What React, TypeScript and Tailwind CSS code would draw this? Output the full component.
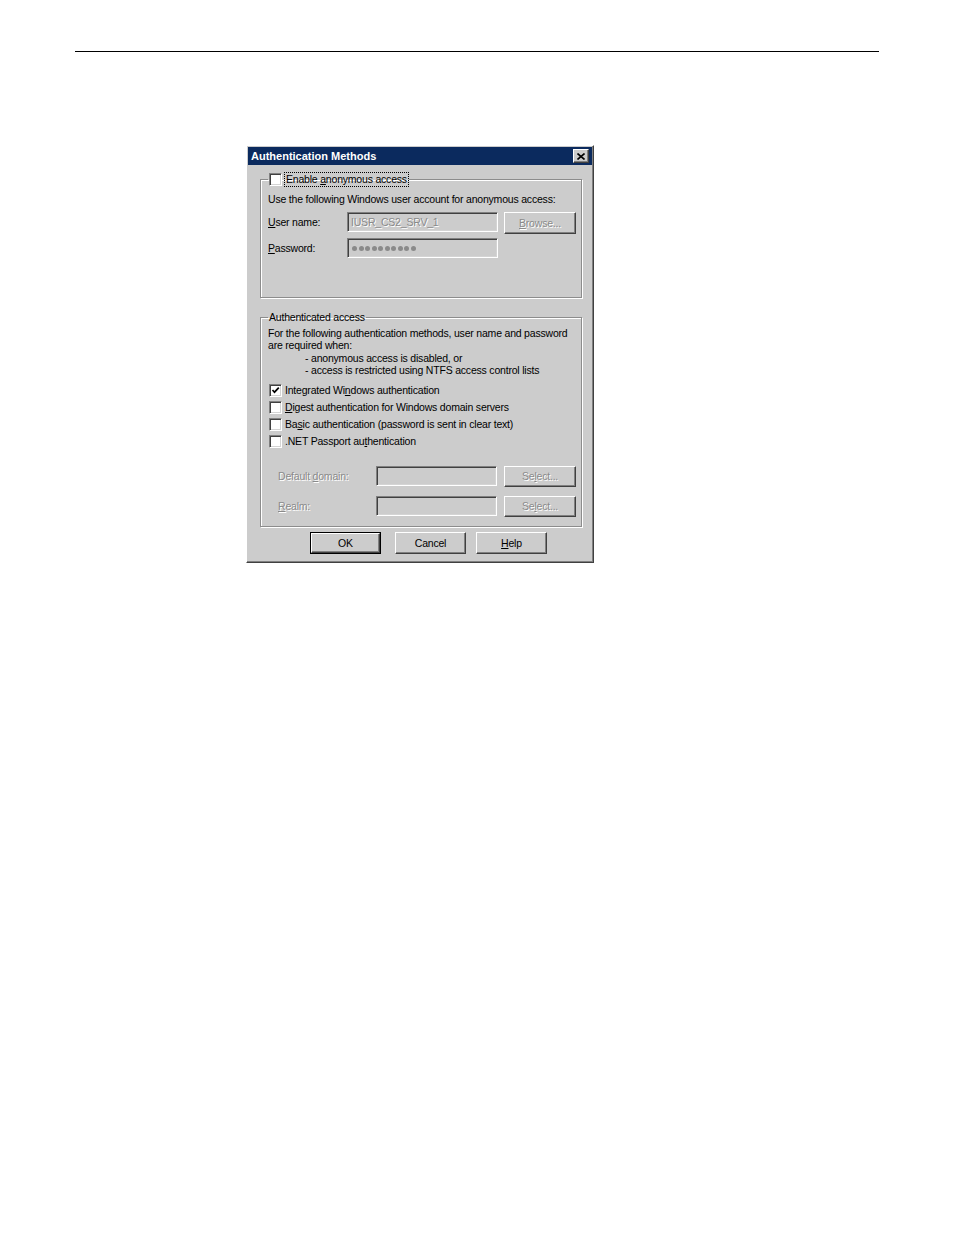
import React from 'react';

const raised =
  'border border-t-white border-l-white border-r-[#404040] border-b-[#404040] shadow-[inset_-1px_-1px_0_#808080]';
const sunken =
  'border border-t-[#808080] border-l-[#808080] border-r-white border-b-white shadow-[inset_1px_1px_0_#404040,inset_-1px_-1px_0_#d4d4d4]';
const etched = 'border border-[#8c8c8c] shadow-[inset_1px_1px_0_#fff,1px_1px_0_#fff]';
const disabledText = 'text-[#8a8a8a] [text-shadow:1px_1px_0_#fff]';

const U: React.FC<{ children: React.ReactNode }> = ({ children }) => (
  <span className="underline underline-offset-[1px] decoration-1">{children}</span>
);

const Check: React.FC<{ checked?: boolean }> = ({ checked }) => (
  <span className={`w-[13px] h-[13px] bg-white flex items-center justify-center shrink-0 ${sunken}`}>
    {checked && (
      <svg width="9" height="9" viewBox="0 0 9 9">
        <path d="M1.5 4 L3.5 6.2 L7.8 1.6" fill="none" stroke="#000" strokeWidth="1.7" />
      </svg>
    )}
  </span>
);

const CheckRow: React.FC<{ checked?: boolean; children: React.ReactNode }> = ({ checked, children }) => (
  <div className="flex items-center gap-[3px] h-[17px] pl-[1px]">
    <Check checked={checked} />
    <span>{children}</span>
  </div>
);

const Field: React.FC<{ width: string; children?: React.ReactNode }> = ({ width, children }) => (
  <div className={`${width} h-[20px] shrink-0 flex items-center px-[3px] ${sunken} ${disabledText}`}>{children}</div>
);

const Button: React.FC<{ children: React.ReactNode; disabled?: boolean; isDefault?: boolean; className?: string }> = ({
  children,
  disabled,
  isDefault,
  className = 'h-[22px]',
}) => {
  if (isDefault) {
    return (
      <div className={`w-[71px] border border-black ${className}`}>
        <div className={`h-full flex items-center justify-center ${raised}`}>{children}</div>
      </div>
    );
  }
  return (
    <div
      className={`w-[71px] shrink-0 flex items-center justify-center ${raised} ${disabled ? disabledText : ''} ${className}`}
    >
      {children}
    </div>
  );
};

const dots = Array.from({ length: 10 });

export default function App() {
  return (
    <div className="min-h-[1235px] bg-white font-['Liberation_Sans',Arial,sans-serif] text-[10.5px] tracking-[-0.2px] leading-[13px] text-black">
      <div className="pt-[51px] px-[75px]">
        <div className="h-px bg-black" />
      </div>

      <div className={`ml-[246px] mt-[93px] w-[348px] h-[418px] bg-[#cccccc] p-px ${raised}`}>
        {/* title bar */}
        <div className="h-[18px] bg-[#0b2a5e] flex items-center justify-between pl-[3px] pr-[3px]">
          <span className="text-white font-bold text-[11px] tracking-[0px]">Authentication Methods</span>
          <div className={`w-[16px] h-[14px] bg-[#cccccc] flex items-center justify-center ${raised}`}>
            <svg width="8" height="7" viewBox="0 0 8 7">
              <path d="M0.5 0.5 L7.5 6.5 M7.5 0.5 L0.5 6.5" stroke="#000" strokeWidth="1.6" />
            </svg>
          </div>
        </div>

        <div className="pl-[12px] pr-[10px] pt-[8px]">
          {/* anonymous access */}
          <fieldset className={`${etched} pl-[7px] pr-[4px] pb-[39px] pt-[5px]`}>
            <legend className="ml-0 px-[1px] flex items-center gap-[3px]">
              <Check />
              <span className="outline outline-1 outline-dotted outline-black px-px">
                Enable <U>a</U>nonymous access
              </span>
            </legend>
            <div className="mt-[2px]">Use the following Windows user account for anonymous access:</div>
            <div className="flex items-start mt-[6px]">
              <span className="w-[79px] shrink-0 h-[20px] flex items-center">
                <span>
                  <U>U</U>ser name:
                </span>
              </span>
              <Field width="w-[151px]">IUSR_CS2_SRV_1</Field>
              <Button disabled className="ml-[6px] w-[72px] h-[22px]">
                <span>
                  <U>B</U>rowse...
                </span>
              </Button>
            </div>
            <div className="flex items-start mt-[4px]">
              <span className="w-[79px] shrink-0 h-[20px] flex items-center">
                <span>
                  <U>P</U>assword:
                </span>
              </span>
              <Field width="w-[151px]">
                <span className="flex gap-[1.5px] pl-[1px]">
                  {dots.map((_, i) => (
                    <span key={i} className="w-[5px] h-[5px] rounded-full bg-[#8a8a8a]" />
                  ))}
                </span>
              </Field>
            </div>
          </fieldset>

          {/* authenticated access */}
          <fieldset className={`${etched} mt-[13px] pl-[7px] pr-[4px] pb-[9px]`}>
            <legend className="ml-0 px-[1px]">Authenticated access</legend>
            <div className="leading-[12.3px] mt-[3px]">
              <div>For the following authentication methods, user name and password</div>
              <div>are required when:</div>
              <div className="pl-[37px]">- anonymous access is disabled, or</div>
              <div className="pl-[37px]">- access is restricted using NTFS access control lists</div>
            </div>
            <div className="mt-[6px]">
              <CheckRow checked>
                Integrated Wi<U>n</U>dows authentication
              </CheckRow>
              <CheckRow>
                <U>D</U>igest authentication for Windows domain servers
              </CheckRow>
              <CheckRow>
                Ba<U>s</U>ic authentication (password is sent in clear text)
              </CheckRow>
              <CheckRow>
                .NET Passport au<U>t</U>hentication
              </CheckRow>
            </div>
            <div className="flex items-start mt-[16px]">
              <span className={`w-[108px] shrink-0 h-[20px] flex items-center pl-[10px] ${disabledText}`}>
                <span>
                  Default <U>d</U>omain:
                </span>
              </span>
              <Field width="w-[121px]" />
              <Button disabled className="ml-[7px] w-[72px] h-[21px]">
                <span>
                  Se<U>l</U>ect...
                </span>
              </Button>
            </div>
            <div className="flex items-start mt-[9px]">
              <span className={`w-[108px] shrink-0 h-[20px] flex items-center pl-[10px] ${disabledText}`}>
                <span>
                  <U>R</U>ealm:
                </span>
              </span>
              <Field width="w-[121px]" />
              <Button disabled className="ml-[7px] w-[72px] h-[21px]">
                <span>
                  Se<U>l</U>ect...
                </span>
              </Button>
            </div>
          </fieldset>

          {/* dialog buttons */}
          <div className="flex mt-[5px] ml-[50px]">
            <Button isDefault className="h-[22px]">OK</Button>
            <Button className="ml-[14px] h-[22px]">Cancel</Button>
            <Button className="ml-[10px] h-[22px]">
              <span>
                <U>H</U>elp
              </span>
            </Button>
          </div>
        </div>
      </div>
    </div>
  );
}
